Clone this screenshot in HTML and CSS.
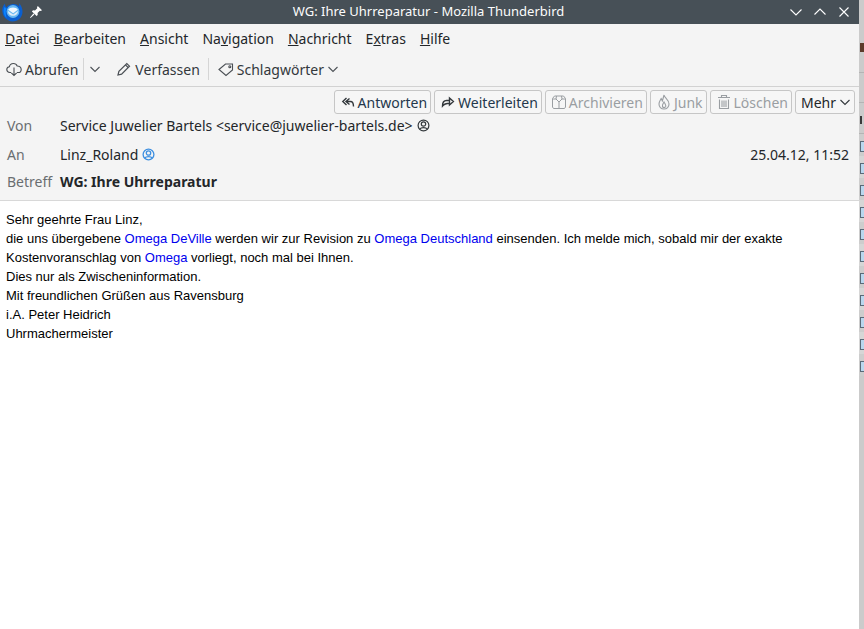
FILE: index.html
```html
<!DOCTYPE html>
<html lang="de">
<head>
<meta charset="utf-8">
<title>WG: Ihre Uhrreparatur - Mozilla Thunderbird</title>
<link rel="stylesheet" href="styles.css">
</head>
<body>
<div class="desktop">
  <main class="window">
    <header class="titlebar">
      <div class="tb-left">
        <svg class="logo" width="22" height="22" viewBox="0 0 22 22"><path d="M4 2.5 C1.5 5 .8 8 1.5 11.5 C2.3 16 6 20 11.5 20.5 C17 20.5 21.3 16.5 21.5 11 C21.6 7.5 20.3 4.5 18 2 C18.5 3.5 18.4 4.5 18 5.2 C16 3.5 13.5 2.8 11 3.2 C8.5 3.5 6.5 4.8 5.4 6.5 C4.5 5.5 4 4 4 2.5Z" fill="#0a5fd0"/><path d="M3.5 6 C2 9 2.5 14 5.5 17 C4.5 13 4.5 9.5 5.5 7.5Z" fill="#0a84ff"/><circle cx="12" cy="10.5" r="6.4" fill="#67b8f2"/><path d="M7.2 8.8 C8 7.4 10 6.6 12 6.6 C14 6.6 16 7.4 16.8 8.8 L12.2 12.2Z" fill="#f0f7fd"/><path d="M7 10 L12.2 13.6 L17 10 C17 12.8 15 14.8 12 14.8 C9 14.8 7 12.8 7 10Z" fill="#dcebf8"/></svg>
        <svg class="pin" width="14" height="14" viewBox="0 0 14 14"><path d="M8.8 1 L13 5.2 L11.7 6 L10.8 5.7 L8.6 8 L8.7 10 L7.6 11.1 L2.9 6.4 L4 5.3 L6 5.4 L8.3 3.2 L8 2.3Z M4.4 8.6 L5.4 9.6 L1.6 13 L1 12.4Z" fill="#fff"/></svg>
      </div>
      <div class="tb-title">WG: Ihre Uhrreparatur - Mozilla Thunderbird</div>
      <div class="tb-controls">
        <svg width="14" height="14" viewBox="0 0 14 14"><path d="M1.5 4.5 L7 10 L12.5 4.5" fill="none" stroke="#fff" stroke-width="1.1"/></svg>
        <svg width="14" height="14" viewBox="0 0 14 14"><path d="M1.5 9.5 L7 4 L12.5 9.5" fill="none" stroke="#fff" stroke-width="1.1"/></svg>
        <svg width="14" height="14" viewBox="0 0 14 14"><path d="M2.5 2.5 L11.5 11.5 M11.5 2.5 L2.5 11.5" fill="none" stroke="#fff" stroke-width="1.1"/></svg>
      </div>
    </header>

    <nav class="menubar">
      <span><u>D</u>atei</span>
      <span><u>B</u>earbeiten</span>
      <span><u>A</u>nsicht</span>
      <span>Na<u>v</u>igation</span>
      <span><u>N</u>achricht</span>
      <span>E<u>x</u>tras</span>
      <span><u>H</u>ilfe</span>
    </nav>

    <div class="toolbar">
      <span class="tool">
        <svg width="16" height="16" viewBox="0 0 16 16" fill="none" stroke="#4a4f54" stroke-width="1.1"><path d="M5 11.5 H3.8 C2 11.5 .8 10.2 .8 8.5 C.8 6.9 2 5.8 3.4 5.7 C3.8 3.7 5.4 2.5 7.4 2.5 C9.2 2.5 10.6 3.5 11.2 5 C13.4 4.9 15.2 6.4 15.2 8.4 C15.2 10.2 14 11.5 12.2 11.5 H11"/><path d="M8 6.5 V14.5 M5.3 11.8 L8 14.5 L10.7 11.8"/></svg>
        Abrufen
      </span>
      <span class="divider"></span>
      <svg class="chev-btn" width="12" height="12" viewBox="0 0 12 12"><path d="M1.5 4 L6 8.5 L10.5 4" fill="none" stroke="#4d5257" stroke-width="1.1"/></svg>
      <span class="tool compose">
        <svg width="16" height="16" viewBox="0 0 16 16" fill="none" stroke="#4a4f54" stroke-width="1.2"><path d="M2 14 L2.9 10.4 L10.8 2.5 L13.5 5.2 L5.6 13.1Z M9.5 3.9 L12.1 6.5"/></svg>
        Verfassen
      </span>
      <span class="divider tag-divider"></span>
      <span class="tool">
        <svg width="16" height="16" viewBox="0 0 16 16" fill="none" stroke="#4a4f54" stroke-width="1.1"><path d="M1 8.5 L7.5 3 L14.5 3 L14.5 9 L8 14.5Z"/><circle cx="11.8" cy="5.8" r="1"/></svg>
        Schlagwörter
        <svg width="12" height="12" viewBox="0 0 12 12"><path d="M1.5 4 L6 8.5 L10.5 4" fill="none" stroke="#4d5257" stroke-width="1.1"/></svg>
      </span>
    </div>

    <section class="msg-header">
      <div class="actions">
        <button class="btn">
          <svg width="14" height="14" viewBox="0 0 14 14" fill="none" stroke="#33383c" stroke-width="1.4"><path d="M5.5 3 L1.8 6.5 L5.5 10 M8.5 3.5 L5 6.5 L8.5 9.5 M5 6.5 H9.5 C11.5 6.5 12.5 8 12.5 11.5"/></svg>
          Antworten
        </button>
        <button class="btn">
          <svg width="14" height="14" viewBox="0 0 14 14" fill="none" stroke="#33383c" stroke-width="1.4"><path d="M8.5 3 L12.4 6.5 L8.5 10Z M8.5 5.5 H5.5 C3 5.5 1.5 7.5 1.5 11 C3 9 4.5 8.2 8.5 8.2"/></svg>
          Weiterleiten
        </button>
        <button class="btn off">
          <svg width="14" height="16" viewBox="0 0 14 16" fill="none" stroke="#9a9ea2" stroke-width="1"><path d="M2.5 2 H11.5 L13.5 4.5 V13 L12.5 14.5 H1.5 L.5 13 V4.5Z M.5 5 H4 L7 8 L10 5 H13.5 M4.5 2 L4 5 M9.5 2 L10 5 M7 8 V14.5"/></svg>
          Archivieren
        </button>
        <button class="btn off">
          <svg width="14" height="16" viewBox="0 0 14 16" fill="none" stroke="#9a9ea2" stroke-width="1.1"><path d="M7 1 C7.5 4 12 5.5 12 10 C12 13 10 15 7 15 C4 15 2 13 2 10 C2 7.5 3.5 6 4.2 4.5 C5 5.5 5 6.5 5.3 7 C6 5 6.5 3 7 1Z"/><path d="M7 8 C6 10 5 11 5.5 12.5 C6 14 8 14 8.7 12.5 C9.3 11 8 10 7 8Z"/></svg>
          Junk
        </button>
        <button class="btn off">
          <svg width="14" height="16" viewBox="0 0 14 16" fill="none" stroke="#9a9ea2" stroke-width="1.1"><path d="M1 3.5 H13 M4.5 3.5 V1.5 H9.5 V3.5 M2.5 5.5 V14.5 H11.5 V5.5 M5 6.5 V13 M7 6.5 V13 M9 6.5 V13"/></svg>
          Löschen
        </button>
        <button class="btn more">
          Mehr
          <svg width="12" height="12" viewBox="0 0 12 12"><path d="M1.5 4 L6 8.5 L10.5 4" fill="none" stroke="#33383c" stroke-width="1.1"/></svg>
        </button>
      </div>
      <div class="row row-from">
        <span class="label">Von</span>
        <span class="value">Service Juwelier Bartels &lt;service@juwelier-bartels.de&gt;</span>
        <svg class="contact" width="13" height="13" viewBox="0 0 13 13" fill="none" stroke="#33383c" stroke-width="1.2"><circle cx="6.5" cy="6.5" r="5.4"/><circle cx="6.5" cy="5" r="2.2"/><path d="M2.8 10.2 C4 8.2 9 8.2 10.2 10.2"/></svg>
      </div>
      <div class="row row-to">
        <span class="label">An</span>
        <span class="value">Linz_Roland</span>
        <svg class="contact" width="13" height="13" viewBox="0 0 13 13" fill="none" stroke="#3d8fe0" stroke-width="1.3"><circle cx="6.5" cy="6.5" r="5.4"/><circle cx="6.5" cy="5" r="2.2"/><path d="M2.8 10.2 C4 8.2 9 8.2 10.2 10.2"/></svg>
        <span class="date">25.04.12, 11:52</span>
      </div>
      <div class="row row-subject">
        <span class="label">Betreff</span>
        <span class="value subject">WG: Ihre Uhrreparatur</span>
      </div>
    </section>

    <article class="body">
      <p>Sehr geehrte Frau Linz,</p>
      <p>die uns übergebene <a>Omega DeVille</a> werden wir zur Revision zu <a>Omega Deutschland</a> einsenden. Ich melde mich, sobald mir der exakte</p>
      <p>Kostenvoranschlag von <a>Omega</a> vorliegt, noch mal bei Ihnen.</p>
      <p>Dies nur als Zwischeninformation.</p>
      <p>Mit freundlichen Grüßen aus Ravensburg</p>
      <p>i.A. Peter Heidrich</p>
      <p>Uhrmachermeister</p>
    </article>
  </main>

  <aside class="behind">
    <div class="b-top"></div>
    <div class="b-mark b-t"></div>
    <div class="b-gap b-g1"></div>
    <div class="b-gap b-g2"><span class="b-dot"></span></div>
    <div class="b-list">
      <i></i><i></i><i></i><i></i><i></i><i></i><i></i><i></i><i></i><i></i><i></i>
    </div>
  </aside>
</div>
</body>
</html>
```

FILE: styles.css
```css
* { box-sizing: border-box; }
html, body { margin: 0; padding: 0; height: 100%; overflow: hidden; background: #fff; }
.desktop { display: flex; width: 864px; height: 629px; }
.window {
  width: 859px; flex: none; display: flex; flex-direction: column;
  font-family: "Noto Sans", sans-serif; font-size: 14px; color: #232629;
}
.titlebar {
  height: 24px; background: #475057; color: #fcfcfc; position: relative;
  display: flex; align-items: center; justify-content: space-between; flex: none;
}
.tb-left { display: flex; align-items: center; gap: 6px; padding-left: 1px; position: relative; z-index: 1; }
.logo, .pin { display: block; }
.tb-title {
  position: absolute; left: 0; right: 2px; top: 0; line-height: 22px;
  text-align: center; font-size: 13px;
}
.tb-controls { display: flex; gap: 10px; padding-right: 8px; position: relative; z-index: 1; }
.menubar {
  height: 28px; background: #f4f4f4; display: flex; gap: 14px; padding: 0 0 0 5px;
  align-items: center; flex: none;
}
.toolbar {
  height: 35px; background: #f4f4f4; border-bottom: 1px solid #d2d2d2;
  display: flex; align-items: center; padding-left: 6px; flex: none; color: #33383c;
}
.tool { display: flex; align-items: center; gap: 3px; }
.divider { width: 1px; height: 22px; background: #d5d5d5; margin: 0 5px; }
.tag-divider { margin: 0 9px 0 8px; }
.compose { margin-left: 15px; }
.msg-header {
  height: 114px; background: #f4f4f4; border-bottom: 1px solid #d8d8d8;
  display: flex; flex-direction: column; flex: none;
}
.actions { display: flex; justify-content: flex-end; gap: 3px; padding: 3px 4px 0 0; height: 27px; flex: none; }
.btn {
  height: 24px; padding: 0 3px 0 6px; border: 1px solid #c6c6c6; border-radius: 3px; background: #f6f6f6;
  font: inherit; color: #24384c; display: flex; align-items: center; gap: 3px;
}
.off { color: #9a9ea2; }
.more { padding: 0 3px 0 5px; color: #232629; }
.row { display: flex; align-items: center; padding-left: 7px; color: #232629; }
.row-from { height: 23px; }
.row-to { height: 35px; padding-right: 10px; }
.row-subject { height: 19px; }
.label { width: 53px; color: #6a6e71; flex: none; }
.contact { margin-left: 4px; }
.date { margin-left: auto; }
.subject { font-weight: 700; color: #232629; }
.body {
  flex: 1; background: #fff; padding: 9px 6px 0; font-family: "Liberation Sans", sans-serif;
  font-size: 13px; color: #000; line-height: 19px;
}
.body p { margin: 0; }
.body a { color: #0000ee; }
.behind {
  width: 5px; flex: none; background: #cbcbcb;
  display: flex; flex-direction: column; overflow: hidden;
}
.b-top { height: 24px; background: #cbcbcb; flex: none; }
.b-mark { flex: none; }
.b-t { height: 48px; padding: 19px 0 0 1px; }
.b-t::before { content: ""; display: block; width: 4px; height: 9px; background: #5c3a2a; }
.b-gap { flex: none; border-top: 1px solid #b4b4b4; }
.b-g1 { height: 30px; }
.b-g2 { height: 31px; padding: 13px 0 0 1px; }
.b-dot { display: block; width: 2px; height: 8px; background: #3a3a3a; }
.b-list { display: flex; flex-direction: column; flex: none; border-top: 1px solid #b4b4b4; }
.b-list i { display: block; height: 22px; flex: none; padding: 7px 0 0 1px; background: #cdcdcd; }
.b-list i:nth-child(even) { background: #d6d6d6; }
.b-list i::before {
  content: ""; display: block; width: 4px; height: 9px; background: #b9d7ee;
  border: 1px solid #5a6a78; border-right: 0;
}
```
